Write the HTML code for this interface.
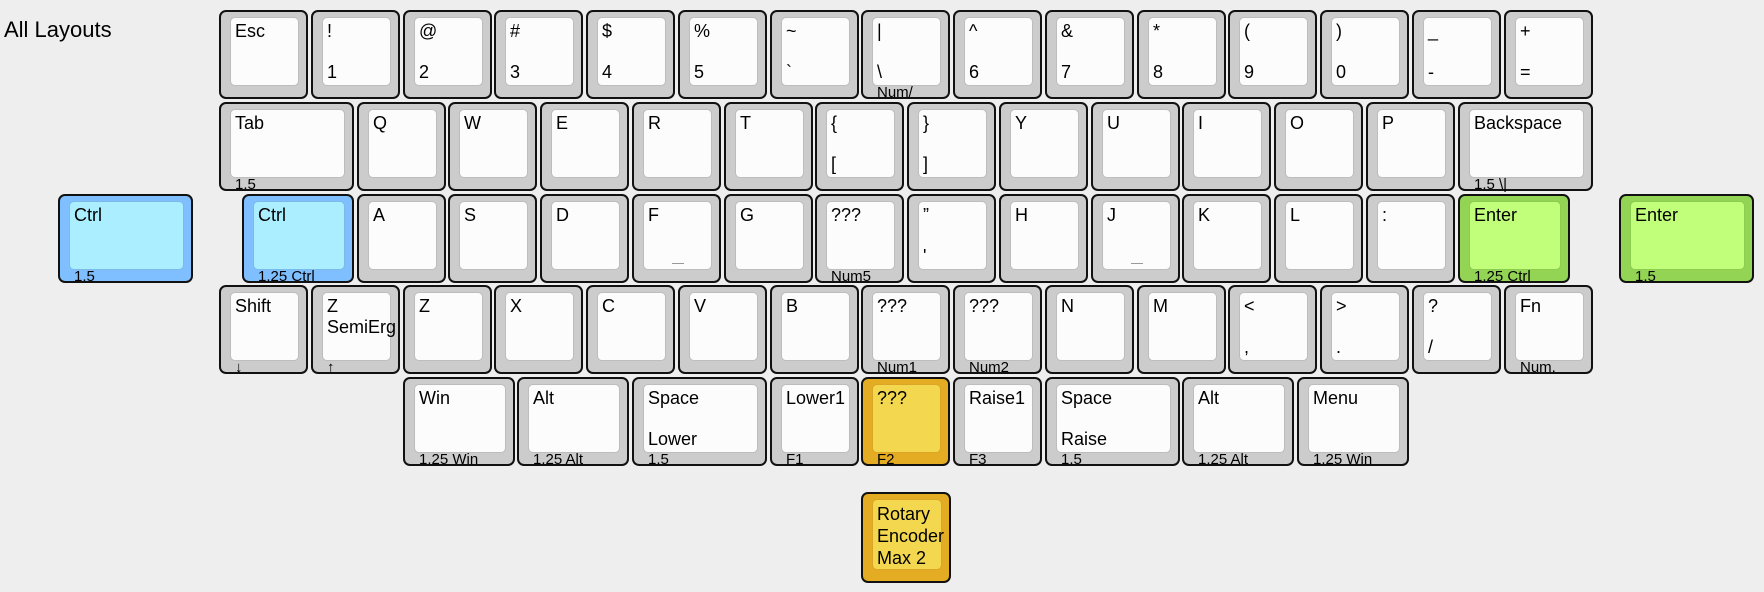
<!DOCTYPE html>
<html><head><meta charset="utf-8"><style>
body{margin:0;width:1764px;height:592px;background:#eeeeee;position:relative;overflow:hidden;font-family:"Liberation Sans",Arial,sans-serif;color:#000}
.title{position:absolute;left:4px;top:17px;font-size:22px}
.k{position:absolute;box-sizing:border-box;height:89px;border:2px solid #111;border-radius:7px;background:#cccccc}
.c{position:absolute;left:9px;top:5px;right:7px;bottom:11px;border:1.5px solid #bdbdbd;border-radius:5px;background:#fcfcfc;box-sizing:border-box}
.t{position:absolute;left:4px;top:3px;font-size:18px;line-height:21px;white-space:nowrap}
.bl{position:absolute;left:4px;bottom:3px;font-size:18px;line-height:20px;white-space:nowrap}
.f{position:absolute;left:14px;bottom:-4px;font-size:15px;line-height:17px;white-space:nowrap}
.h{position:absolute;left:50%;margin-left:-6px;width:12px;bottom:5px;height:1px;background:#999}
.b{background:#80bfff}.b .c{background:#aaeeff;border-color:#7bbbe8}
.g{background:#94d455}.g .c{background:#c1ff7a;border-color:#8ccd50}
.y{background:#e3ac22}.y .c{background:#f3d84f;border-color:#dba525}
</style></head><body>
<div class="title">All Layouts</div>

<!-- row 0 -->
<div class="k" style="left:219px;top:10px;width:89px"><div class="c"><span class="t">Esc</span></div></div>
<div class="k" style="left:311px;top:10px;width:89px"><div class="c"><span class="t">!</span><span class="bl">1</span></div></div>
<div class="k" style="left:403px;top:10px;width:89px"><div class="c"><span class="t">@</span><span class="bl">2</span></div></div>
<div class="k" style="left:494px;top:10px;width:89px"><div class="c"><span class="t">#</span><span class="bl">3</span></div></div>
<div class="k" style="left:586px;top:10px;width:89px"><div class="c"><span class="t">$</span><span class="bl">4</span></div></div>
<div class="k" style="left:678px;top:10px;width:89px"><div class="c"><span class="t">%</span><span class="bl">5</span></div></div>
<div class="k" style="left:770px;top:10px;width:89px"><div class="c"><span class="t">~</span><span class="bl">`</span></div></div>
<div class="k" style="left:861px;top:10px;width:89px"><div class="c"><span class="t">|</span><span class="bl">\</span></div><span class="f">Num/</span></div>
<div class="k" style="left:953px;top:10px;width:89px"><div class="c"><span class="t">^</span><span class="bl">6</span></div></div>
<div class="k" style="left:1045px;top:10px;width:89px"><div class="c"><span class="t">&amp;</span><span class="bl">7</span></div></div>
<div class="k" style="left:1137px;top:10px;width:89px"><div class="c"><span class="t">*</span><span class="bl">8</span></div></div>
<div class="k" style="left:1228px;top:10px;width:89px"><div class="c"><span class="t">(</span><span class="bl">9</span></div></div>
<div class="k" style="left:1320px;top:10px;width:89px"><div class="c"><span class="t">)</span><span class="bl">0</span></div></div>
<div class="k" style="left:1412px;top:10px;width:89px"><div class="c"><span class="t">_</span><span class="bl">-</span></div></div>
<div class="k" style="left:1504px;top:10px;width:89px"><div class="c"><span class="t">+</span><span class="bl">=</span></div></div>

<!-- row 1 -->
<div class="k" style="left:219px;top:102px;width:135px"><div class="c"><span class="t">Tab</span></div><span class="f">1.5</span></div>
<div class="k" style="left:357px;top:102px;width:89px"><div class="c"><span class="t">Q</span></div></div>
<div class="k" style="left:448px;top:102px;width:89px"><div class="c"><span class="t">W</span></div></div>
<div class="k" style="left:540px;top:102px;width:89px"><div class="c"><span class="t">E</span></div></div>
<div class="k" style="left:632px;top:102px;width:89px"><div class="c"><span class="t">R</span></div></div>
<div class="k" style="left:724px;top:102px;width:89px"><div class="c"><span class="t">T</span></div></div>
<div class="k" style="left:815px;top:102px;width:89px"><div class="c"><span class="t">{</span><span class="bl">[</span></div></div>
<div class="k" style="left:907px;top:102px;width:89px"><div class="c"><span class="t">}</span><span class="bl">]</span></div></div>
<div class="k" style="left:999px;top:102px;width:89px"><div class="c"><span class="t">Y</span></div></div>
<div class="k" style="left:1091px;top:102px;width:89px"><div class="c"><span class="t">U</span></div></div>
<div class="k" style="left:1182px;top:102px;width:89px"><div class="c"><span class="t">I</span></div></div>
<div class="k" style="left:1274px;top:102px;width:89px"><div class="c"><span class="t">O</span></div></div>
<div class="k" style="left:1366px;top:102px;width:89px"><div class="c"><span class="t">P</span></div></div>
<div class="k" style="left:1458px;top:102px;width:135px"><div class="c"><span class="t">Backspace</span></div><span class="f">1.5 \|</span></div>

<!-- row 2 -->
<div class="k b" style="left:58px;top:194px;width:135px"><div class="c"><span class="t">Ctrl</span></div><span class="f">1.5</span></div>
<div class="k b" style="left:242px;top:194px;width:112px"><div class="c"><span class="t">Ctrl</span></div><span class="f">1.25 Ctrl</span></div>
<div class="k" style="left:357px;top:194px;width:89px"><div class="c"><span class="t">A</span></div></div>
<div class="k" style="left:448px;top:194px;width:89px"><div class="c"><span class="t">S</span></div></div>
<div class="k" style="left:540px;top:194px;width:89px"><div class="c"><span class="t">D</span></div></div>
<div class="k" style="left:632px;top:194px;width:89px"><div class="c"><span class="t">F</span><span class="h"></span></div></div>
<div class="k" style="left:724px;top:194px;width:89px"><div class="c"><span class="t">G</span></div></div>
<div class="k" style="left:815px;top:194px;width:89px"><div class="c"><span class="t">???</span></div><span class="f">Num5</span></div>
<div class="k" style="left:907px;top:194px;width:89px"><div class="c"><span class="t">”</span><span class="bl">'</span></div></div>
<div class="k" style="left:999px;top:194px;width:89px"><div class="c"><span class="t">H</span></div></div>
<div class="k" style="left:1091px;top:194px;width:89px"><div class="c"><span class="t">J</span><span class="h"></span></div></div>
<div class="k" style="left:1182px;top:194px;width:89px"><div class="c"><span class="t">K</span></div></div>
<div class="k" style="left:1274px;top:194px;width:89px"><div class="c"><span class="t">L</span></div></div>
<div class="k" style="left:1366px;top:194px;width:89px"><div class="c"><span class="t">:</span></div></div>
<div class="k g" style="left:1458px;top:194px;width:112px"><div class="c"><span class="t">Enter</span></div><span class="f">1.25 Ctrl</span></div>
<div class="k g" style="left:1619px;top:194px;width:135px"><div class="c"><span class="t">Enter</span></div><span class="f">1.5</span></div>

<!-- row 3 -->
<div class="k" style="left:219px;top:285px;width:89px"><div class="c"><span class="t">Shift</span></div><span class="f">↓</span></div>
<div class="k" style="left:311px;top:285px;width:89px"><div class="c"><span class="t">Z<br>SemiErg</span></div><span class="f">↑</span></div>
<div class="k" style="left:403px;top:285px;width:89px"><div class="c"><span class="t">Z</span></div></div>
<div class="k" style="left:494px;top:285px;width:89px"><div class="c"><span class="t">X</span></div></div>
<div class="k" style="left:586px;top:285px;width:89px"><div class="c"><span class="t">C</span></div></div>
<div class="k" style="left:678px;top:285px;width:89px"><div class="c"><span class="t">V</span></div></div>
<div class="k" style="left:770px;top:285px;width:89px"><div class="c"><span class="t">B</span></div></div>
<div class="k" style="left:861px;top:285px;width:89px"><div class="c"><span class="t">???</span></div><span class="f">Num1</span></div>
<div class="k" style="left:953px;top:285px;width:89px"><div class="c"><span class="t">???</span></div><span class="f">Num2</span></div>
<div class="k" style="left:1045px;top:285px;width:89px"><div class="c"><span class="t">N</span></div></div>
<div class="k" style="left:1137px;top:285px;width:89px"><div class="c"><span class="t">M</span></div></div>
<div class="k" style="left:1228px;top:285px;width:89px"><div class="c"><span class="t">&lt;</span><span class="bl">,</span></div></div>
<div class="k" style="left:1320px;top:285px;width:89px"><div class="c"><span class="t">&gt;</span><span class="bl">.</span></div></div>
<div class="k" style="left:1412px;top:285px;width:89px"><div class="c"><span class="t">?</span><span class="bl">/</span></div></div>
<div class="k" style="left:1504px;top:285px;width:89px"><div class="c"><span class="t">Fn</span></div><span class="f">Num.</span></div>

<!-- row 4 -->
<div class="k" style="left:403px;top:377px;width:112px"><div class="c"><span class="t">Win</span></div><span class="f">1.25 Win</span></div>
<div class="k" style="left:517px;top:377px;width:112px"><div class="c"><span class="t">Alt</span></div><span class="f">1.25 Alt</span></div>
<div class="k" style="left:632px;top:377px;width:135px"><div class="c"><span class="t">Space</span><span class="bl">Lower</span></div><span class="f">1.5</span></div>
<div class="k" style="left:770px;top:377px;width:89px"><div class="c"><span class="t">Lower1</span></div><span class="f">F1</span></div>
<div class="k y" style="left:861px;top:377px;width:89px"><div class="c"><span class="t">???</span></div><span class="f">F2</span></div>
<div class="k" style="left:953px;top:377px;width:89px"><div class="c"><span class="t">Raise1</span></div><span class="f">F3</span></div>
<div class="k" style="left:1045px;top:377px;width:135px"><div class="c"><span class="t">Space</span><span class="bl">Raise</span></div><span class="f">1.5</span></div>
<div class="k" style="left:1182px;top:377px;width:112px"><div class="c"><span class="t">Alt</span></div><span class="f">1.25 Alt</span></div>
<div class="k" style="left:1297px;top:377px;width:112px"><div class="c"><span class="t">Menu</span></div><span class="f">1.25 Win</span></div>

<!-- encoder -->
<div class="k y" style="left:861px;top:492px;width:90px;height:91px"><div class="c"><span class="t" style="line-height:22px">Rotary<br>Encoder<br>Max 2</span></div></div>
</body></html>
